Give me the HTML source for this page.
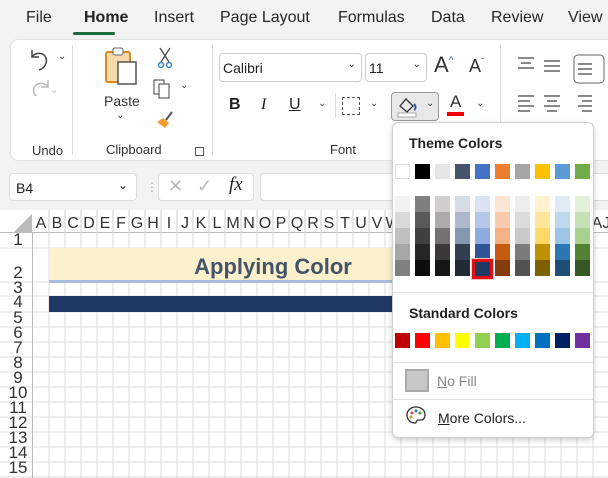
<!DOCTYPE html><html><head><style>
*{margin:0;padding:0;box-sizing:border-box}
body{width:608px;height:478px;overflow:hidden;background:#f3f3f3;font-family:"Liberation Sans",sans-serif;position:relative;color:#222}
.a{position:absolute}
.tab{position:absolute;top:9px;font-size:16px;color:#262626}
.lbl{position:absolute;font-size:13px;color:#333}
.sw{position:absolute;width:15px;height:15px}
.col{position:absolute;width:15px;top:196px}
.col div{height:16px}
.chev{position:absolute;font-size:10px;color:#444}
</style></head><body>
<div class="tab" style="left:26px">File</div>
<div class="tab" style="left:84px;font-weight:bold;color:#222">Home</div>
<div class="a" style="left:73px;top:32px;width:42px;height:3px;background:#1e6b3c;border-radius:2px"></div>
<div class="tab" style="left:154px">Insert</div>
<div class="tab" style="left:220px">Page Layout</div>
<div class="tab" style="left:338px">Formulas</div>
<div class="tab" style="left:431px">Data</div>
<div class="tab" style="left:491px">Review</div>
<div class="tab" style="left:568px">View</div>

<div class="a" style="left:10px;top:39px;width:620px;height:122px;background:#fff;border:1px solid #e0e0e0;border-radius:8px"></div>
<svg class="a" style="left:26px;top:46px" width="30" height="50"><path d="M6 4v7h7M6 11c3-5 12-5 14 1s-3 11-7 12" fill="none" stroke="#444" stroke-width="1.5"/><path d="M22 34v7h-7M22 41c-3-5-12-5-14 1s3 9 6 10" fill="none" stroke="#bbb" stroke-width="1.5"/></svg>
<div class="chev" style="left:58px;top:51px">⌄</div>
<div class="chev" style="left:50px;top:85px;color:#bbb">⌄</div>
<div class="lbl" style="left:32px;top:143px">Undo</div>
<div class="a" style="left:72px;top:45px;width:1px;height:110px;background:#ddd"></div>
<svg class="a" style="left:104px;top:46px" width="40" height="40"><rect x="2" y="6" width="24" height="30" rx="2" fill="#f5d9a8" stroke="#d9891e" stroke-width="2"/><rect x="9" y="2" width="10" height="7" rx="2" fill="#fff" stroke="#666"/><rect x="14" y="16" width="18" height="22" fill="#fff" stroke="#555" stroke-width="1.5"/></svg>
<div class="lbl" style="left:104px;top:93px;font-size:14px">Paste</div>
<div class="chev" style="left:116px;top:110px">⌄</div>
<svg class="a" style="left:155px;top:46px" width="20" height="24"><path d="M5 2l9 14M15 2l-9 14" stroke="#444" stroke-width="1.2"/><circle cx="6" cy="19" r="2.5" fill="none" stroke="#3b7fc4" stroke-width="1.5"/><circle cx="14" cy="19" r="2.5" fill="none" stroke="#3b7fc4" stroke-width="1.5"/></svg>
<svg class="a" style="left:152px;top:78px" width="22" height="22"><rect x="2" y="2" width="10" height="14" fill="#fff" stroke="#444"/><rect x="7" y="6" width="10" height="14" fill="#fff" stroke="#444"/></svg>
<div class="chev" style="left:180px;top:80px">⌄</div>
<svg class="a" style="left:154px;top:110px" width="22" height="20"><path d="M3 12l8 6 4-5-6-5z" fill="#f29b2a"/><path d="M12 10l6-8" stroke="#555" stroke-width="2"/></svg>
<div class="lbl" style="left:106px;top:142px">Clipboard</div>
<div class="a" style="left:195px;top:147px;width:9px;height:9px;border:1px solid #555"></div>
<div class="a" style="left:212px;top:45px;width:1px;height:110px;background:#ddd"></div>
<div class="a" style="left:219px;top:53px;width:143px;height:29px;border:1px solid #ccc;border-radius:4px;font-size:14px;padding:6px 3px">Calibri<span style="position:absolute;right:5px;top:5px;font-size:10px">⌄</span></div>
<div class="a" style="left:365px;top:53px;width:62px;height:29px;border:1px solid #ccc;border-radius:4px;font-size:14px;padding:6px 3px">11<span style="position:absolute;right:5px;top:5px;font-size:10px">⌄</span></div>
<div class="a" style="left:434px;top:52px;font-size:22px;color:#333">A<sup style="font-size:10px;color:#2b5fa9">^</sup></div>
<div class="a" style="left:469px;top:56px;font-size:18px;color:#333">A<sup style="font-size:10px;color:#2b5fa9">ˇ</sup></div>
<div class="a" style="left:229px;top:96px;font-size:16px;font-weight:bold">B</div>
<div class="a" style="left:261px;top:96px;font-size:16px;font-style:italic;font-family:'Liberation Serif'">I</div>
<div class="a" style="left:289px;top:96px;font-size:16px;text-decoration:underline">U</div>
<div class="chev" style="left:318px;top:98px">⌄</div>
<div class="a" style="left:335px;top:93px;width:1px;height:25px;background:#ddd"></div>
<div class="a" style="left:342px;top:97px;width:18px;height:18px;border:1px dashed #555"></div>
<div class="chev" style="left:370px;top:98px">⌄</div>
<div class="a" style="left:391px;top:92px;width:48px;height:29px;background:#e8e8e8;border:1px solid #999;border-radius:4px"></div>
<svg class="a" style="left:396px;top:96px" width="24" height="22"><path d="M4 10l6-7 7 7-6 6z" fill="none" stroke="#333" stroke-width="1.3"/><path d="M18 8c2 2 2 5 0 6" stroke="#2b5fa9" stroke-width="2" fill="none"/><rect x="2" y="17" width="18" height="4" fill="#fff" stroke="#999" stroke-width=".8"/></svg>
<div class="chev" style="left:426px;top:98px">⌄</div>
<div class="a" style="left:450px;top:92px;font-size:17px;color:#333">A</div>
<div class="a" style="left:447px;top:112px;width:17px;height:4px;background:#e00"></div>
<div class="chev" style="left:476px;top:98px">⌄</div>
<div class="lbl" style="left:330px;top:142px">Font</div>
<div class="a" style="left:500px;top:45px;width:1px;height:110px;background:#ddd"></div>
<svg class="a" style="left:514px;top:52px" width="94" height="70"><g stroke="#444" stroke-width="1.2"><path d="M4 6h16M7 11h10M4 16h16M30 9h16M30 14h16M30 19h16M64 12h14M64 17h14M64 22h14"/><path d="M4 44h16M4 49h12M4 54h16M4 59h12M30 44h16M33 49h10M30 54h16M33 59h10M64 44h14M68 49h10M64 54h14M68 59h10"/></g><rect x="60" y="3" width="30" height="28" rx="4" fill="none" stroke="#666"/></svg>
<div class="a" style="left:9px;top:173px;width:128px;height:28px;background:#fff;border:1px solid #ddd;border-radius:4px;font-size:14px;padding:6px 6px">B4<span style="position:absolute;right:8px;top:4px;font-size:12px">⌄</span></div>
<div class="a" style="left:146px;top:180px;color:#aaa;font-size:12px">⋮</div>
<div class="a" style="left:158px;top:173px;width:96px;height:28px;background:#fff;border:1px solid #ddd;border-radius:4px"></div>
<div class="a" style="left:168px;top:176px;font-size:18px;color:#bbb">✕</div>
<div class="a" style="left:197px;top:176px;font-size:18px;color:#bbb">✓</div>
<div class="a" style="left:229px;top:174px;font-size:19px;font-style:italic;font-family:'Liberation Serif'">fx</div>
<div class="a" style="left:260px;top:173px;width:360px;height:28px;background:#fff;border:1px solid #ddd;border-radius:4px"></div>
<div class="a" style="left:0;top:210px;width:608px;height:268px;background:#fff"></div>
<div class="a" style="left:0;top:210px;width:608px;height:23px;background:#fff;border-bottom:1px solid #bbb"></div>
<div class="a" style="left:0;top:233px;width:33px;height:245px;background:#fff;border-right:1px solid #bbb"></div>
<svg class="a" style="left:12px;top:214px" width="20" height="18"><path d="M20 0v18H2z" fill="#bbb"/></svg>
<svg class="a" style="left:33px;top:210px" width="575" height="268" font-family="Liberation Sans" font-size="15" fill="#333">
<g stroke="#ddd" stroke-width="1">
<path d="M16 23V268M32 23V268M48 23V268M64 23V268M80 23V268M96 23V268M112 23V268M128 23V268M144 23V268M160 23V268M176 23V268M192 23V268M208 23V268M224 23V268M240 23V268M256 23V268M272 23V268M288 23V268M304 23V268M320 23V268M336 23V268M352 23V268M368 23V268M384 23V268M400 23V268M416 23V268M432 23V268M448 23V268M464 23V268M480 23V268M496 23V268M512 23V268M528 23V268M544 23V268M560 23V268"/>
<path d="M-33 38H575M-33 72H575M-33 86H575M-33 102H575M-33 117H575M-33 132H575M-33 147H575M-33 162H575M-33 177H575M-33 192H575M-33 207H575M-33 222H575M-33 237H575M-33 252H575M-33 267H575"/>
</g>
<g stroke="#ccc"><path d="M16 0v23M32 0v23M48 0v23M64 0v23M80 0v23M96 0v23M112 0v23M128 0v23M144 0v23M160 0v23M176 0v23M192 0v23M208 0v23M224 0v23M240 0v23M256 0v23M272 0v23M288 0v23M304 0v23M320 0v23M336 0v23M352 0v23M368 0v23M384 0v23M400 0v23"/></g>
<g text-anchor="middle" font-size="16"><text x="8" y="18">A</text><text x="24" y="18">B</text><text x="40" y="18">C</text><text x="56" y="18">D</text><text x="72" y="18">E</text><text x="88" y="18">F</text><text x="104" y="18">G</text><text x="120" y="18">H</text><text x="136" y="18">I</text><text x="152" y="18">J</text><text x="168" y="18">K</text><text x="184" y="18">L</text><text x="200" y="18">M</text><text x="216" y="18">N</text><text x="232" y="18">O</text><text x="248" y="18">P</text><text x="264" y="18">Q</text><text x="280" y="18">R</text><text x="296" y="18">S</text><text x="312" y="18">T</text><text x="328" y="18">U</text><text x="344" y="18">V</text><text x="360" y="18">W</text><text x="568" y="18">AJ</text></g>
<rect x="16" y="38" width="360" height="33" fill="#fdf0cc"/>
<rect x="16" y="70" width="360" height="3" fill="#a9bce0"/>
<rect x="16" y="86" width="360" height="16" fill="#203864"/>
<text x="240" y="64" text-anchor="middle" font-size="22" font-weight="bold" fill="#44546a">Applying Color</text>
</svg>
<svg class="a" style="left:0;top:233px" width="32" height="245" font-family="Liberation Sans" font-size="17" fill="#333" text-anchor="middle">
<clipPath id="c"><path d="M0 0h32v15H0zM0 16h32v33H0zM0 49h32v14H0zM0 63h32v16H0zM0 79h32v15H0zM0 94h32v15H0zM0 109h32v15H0zM0 124h32v15H0zM0 139h32v15H0zM0 154h32v15H0zM0 169h32v15H0zM0 184h32v15H0zM0 199h32v15H0zM0 214h32v15H0zM0 229h32v15H0z"/></clipPath>
<g stroke="#ddd"><path d="M0 15h32M0 49h32M0 63h32M0 79h32M0 94h32M0 109h32M0 124h32M0 139h32M0 154h32M0 169h32M0 184h32M0 199h32M0 214h32M0 229h32M0 244h32"/></g>
<g clip-path="url(#c)"><text x="18" y="12">1</text><text x="18" y="45">2</text><text x="18" y="60">3</text><text x="18" y="74">4</text><text x="18" y="90">5</text><text x="18" y="105">6</text><text x="18" y="120">7</text><text x="18" y="135">8</text><text x="18" y="150">9</text><text x="18" y="165">10</text><text x="18" y="180">11</text><text x="18" y="195">12</text><text x="18" y="210">13</text><text x="18" y="225">14</text><text x="18" y="240">15</text></g></svg>
<div class="a" style="left:392px;top:122px;width:202px;height:316px;background:#fff;border:1px solid #d0d0d0;border-radius:6px;box-shadow:0 2px 6px rgba(0,0,0,.2)"></div>
<div class="a" style="left:409px;top:135px;font-size:14px;font-weight:bold;color:#222">Theme Colors</div>
<div class="sw" style="left:395px;top:164px;background:#fff;border:1px solid #ddd"></div>
<div class="sw" style="left:415px;top:164px;background:#000"></div>
<div class="sw" style="left:435px;top:164px;background:#e7e6e6"></div>
<div class="sw" style="left:455px;top:164px;background:#44546a"></div>
<div class="sw" style="left:475px;top:164px;background:#4472c4"></div>
<div class="sw" style="left:495px;top:164px;background:#ed7d31"></div>
<div class="sw" style="left:515px;top:164px;background:#a5a5a5"></div>
<div class="sw" style="left:535px;top:164px;background:#ffc000"></div>
<div class="sw" style="left:555px;top:164px;background:#5b9bd5"></div>
<div class="sw" style="left:575px;top:164px;background:#70ad47"></div>
<div class="col" style="left:395px"><div style="background:#f2f2f2"></div><div style="background:#d9d9d9"></div><div style="background:#bfbfbf"></div><div style="background:#a6a6a6"></div><div style="background:#808080"></div></div>
<div class="col" style="left:415px"><div style="background:#7f7f7f"></div><div style="background:#595959"></div><div style="background:#404040"></div><div style="background:#262626"></div><div style="background:#0d0d0d"></div></div>
<div class="col" style="left:435px"><div style="background:#d0cece"></div><div style="background:#aeaaaa"></div><div style="background:#767171"></div><div style="background:#3a3838"></div><div style="background:#171616"></div></div>
<div class="col" style="left:455px"><div style="background:#d6dce5"></div><div style="background:#adb9ca"></div><div style="background:#8497b0"></div><div style="background:#333f50"></div><div style="background:#222a35"></div></div>
<div class="col" style="left:475px"><div style="background:#dae3f3"></div><div style="background:#b4c7e7"></div><div style="background:#8faadc"></div><div style="background:#2f5597"></div><div style="background:#203864"></div></div>
<div class="col" style="left:495px"><div style="background:#fbe5d6"></div><div style="background:#f8cbad"></div><div style="background:#f4b183"></div><div style="background:#c55a11"></div><div style="background:#843c0c"></div></div>
<div class="col" style="left:515px"><div style="background:#ededed"></div><div style="background:#dbdbdb"></div><div style="background:#c9c9c9"></div><div style="background:#7b7b7b"></div><div style="background:#525252"></div></div>
<div class="col" style="left:535px"><div style="background:#fff2cc"></div><div style="background:#ffe699"></div><div style="background:#ffd966"></div><div style="background:#bf9000"></div><div style="background:#7f6000"></div></div>
<div class="col" style="left:555px"><div style="background:#deebf7"></div><div style="background:#bdd7ee"></div><div style="background:#9dc3e6"></div><div style="background:#2e75b6"></div><div style="background:#1f4e79"></div></div>
<div class="col" style="left:575px"><div style="background:#e2f0d9"></div><div style="background:#c5e0b4"></div><div style="background:#a9d18e"></div><div style="background:#548235"></div><div style="background:#385723"></div></div>
<div class="a" style="left:472px;top:259px;width:21px;height:20px;border:3px solid #e01010;box-shadow:0 0 0 1px #f8c0c0"></div>
<div class="a" style="left:393px;top:292px;width:200px;height:1px;background:#e0e0e0"></div>
<div class="a" style="left:409px;top:305px;font-size:14px;font-weight:bold;color:#222">Standard Colors</div>
<div class="sw" style="left:395px;top:333px;background:#c00000"></div>
<div class="sw" style="left:415px;top:333px;background:#ff0000"></div>
<div class="sw" style="left:435px;top:333px;background:#ffc000"></div>
<div class="sw" style="left:455px;top:333px;background:#ffff00"></div>
<div class="sw" style="left:475px;top:333px;background:#92d050"></div>
<div class="sw" style="left:495px;top:333px;background:#00b050"></div>
<div class="sw" style="left:515px;top:333px;background:#00b0f0"></div>
<div class="sw" style="left:535px;top:333px;background:#0070c0"></div>
<div class="sw" style="left:555px;top:333px;background:#002060"></div>
<div class="sw" style="left:575px;top:333px;background:#7030a0"></div>
<div class="a" style="left:393px;top:362px;width:200px;height:1px;background:#e0e0e0"></div>
<div class="a" style="left:405px;top:369px;width:24px;height:23px;background:#c8c8c8;border:2px solid #aaa"></div>
<div class="a" style="left:437px;top:373px;font-size:14px;color:#888"><u>N</u>o Fill</div>
<div class="a" style="left:393px;top:399px;width:200px;height:1px;background:#e0e0e0"></div>
<svg class="a" style="left:405px;top:405px" width="22" height="22"><path d="M11 2c-6 0-9 4-9 8s3 8 8 8c2 0 1-3 3-3h3c3 0 4-3 4-5 0-5-4-8-9-8z" fill="none" stroke="#333" stroke-width="1.3"/><circle cx="7" cy="8" r="1.5" fill="#e04040"/><circle cx="11" cy="6" r="1.5" fill="#3070c0"/><circle cx="15" cy="8" r="1.5" fill="#40a040"/><circle cx="6" cy="12" r="1.5" fill="#d0a020"/></svg>
<div class="a" style="left:438px;top:410px;font-size:14px;color:#222"><u>M</u>ore Colors...</div>
</body></html>
